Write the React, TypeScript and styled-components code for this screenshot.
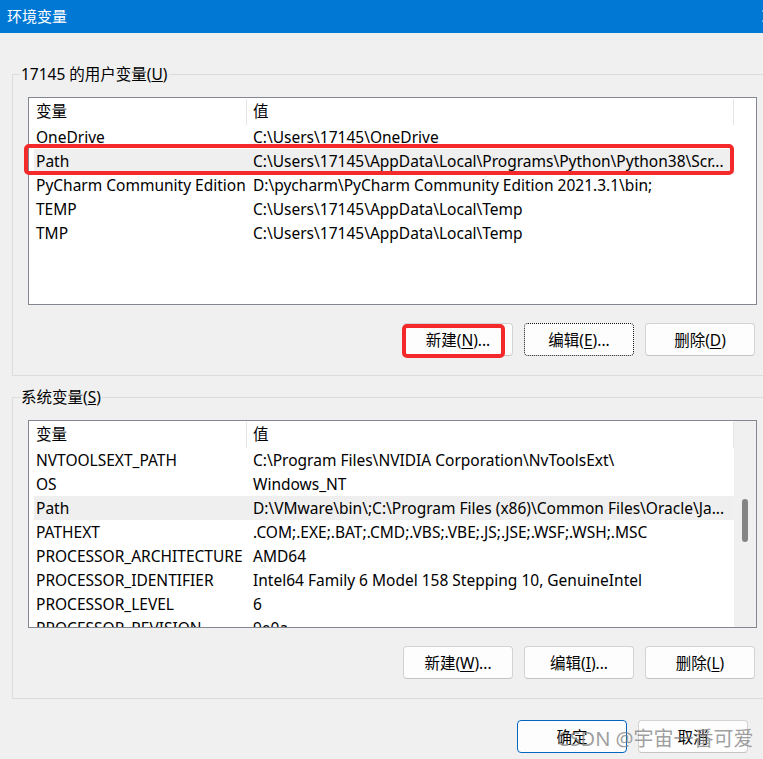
import React from "react";
import styled, { createGlobalStyle } from "styled-components";

const Global = createGlobalStyle`
  html, body {
    margin: 0;
    padding: 0;
    background: #f0f0f0;
    overflow: hidden;
  }
  body {
    font-family: "Noto Sans", "Noto Sans CJK SC", sans-serif;
    font-size: 15.5px;
    color: #000;
  }
`;

const Window = styled.div`
  position: relative;
  width: 800px;
  height: 759px;
  background: #f0f0f0;
  display: flex;
  flex-direction: column;
`;

const TitleBar = styled.div`
  flex: none;
  height: 33px;
  box-sizing: border-box;
  background: #0078d4;
  color: #fff;
  display: flex;
  align-items: center;
  justify-content: space-between;
  padding: 0 26px 2px 7px;
  font-size: 15px;
`;

const Content = styled.div`
  display: flex;
  flex-direction: column;
  padding: 41px 0 0 12px;
`;

const Group = styled.div<{ $gap?: number }>`
  position: relative;
  width: 761px;
  box-sizing: border-box;
  border: 1px solid #dcdcdc;
  padding: 22px 15px 19px 15px;
  margin-top: ${(p) => p.$gap ?? 0}px;
`;

const GroupLabel = styled.div`
  position: absolute;
  top: -11px;
  left: 7px;
  padding: 0 1px;
  line-height: 20px;
  background: #f0f0f0;
`;

const ListBox = styled.div`
  position: relative;
  height: 208px;
  box-sizing: border-box;
  border: 1px solid #828790;
  background: #fff;
  display: flex;
`;

const ListBody = styled.div`
  flex: 1;
  min-width: 0;
  overflow: hidden;
`;

const Header = styled.div`
  display: grid;
  grid-template-columns: 218px 487px 1fr;
  height: 27px;
`;

const HeadCell = styled.div<{ $pad: number; $sep?: boolean }>`
  box-sizing: border-box;
  padding-left: ${(p) => p.$pad}px;
  border-right: ${(p) => (p.$sep ? "1px solid #e5e5e5" : "none")};
  margin-top: 1px;
  line-height: 25px;
  white-space: nowrap;
`;

const Row = styled.div<{ $selected?: boolean }>`
  display: grid;
  grid-template-columns: 213px 1fr;
  width: 700px;
  height: 24px;
  margin-left: 5px;
  line-height: 24px;
  background: ${(p) => (p.$selected ? "#efefef" : "transparent")};
  white-space: nowrap;
`;

const NameCell = styled.div`
  padding-left: 2px;
  overflow: hidden;
`;

const ValueCell = styled.div`
  padding-left: 6px;
  overflow: hidden;
`;

const ScrollTrack = styled.div`
  flex: none;
  width: 22px;
  background: #f0f0f0;
  display: flex;
  justify-content: center;
  align-items: flex-start;
`;

const ScrollThumb = styled.div<{ $top: number; $len: number }>`
  width: 6px;
  height: ${(p) => p.$len}px;
  margin-top: ${(p) => p.$top}px;
  border-radius: 3px;
  background: #858585;
`;

const ButtonRow = styled.div<{ $top: number; $right: number }>`
  display: flex;
  justify-content: flex-end;
  gap: 11px;
  margin-top: ${(p) => p.$top}px;
  padding-right: ${(p) => p.$right}px;
`;

const Button = styled.button<{ $focus?: boolean; $primary?: boolean }>`
  position: relative;
  width: 110px;
  height: 33px;
  box-sizing: border-box;
  padding: 0;
  border-radius: 4px;
  background: #fdfdfd;
  font-family: inherit;
  font-size: 15.5px;
  color: #000;
  border: 1px solid #d3d3d3;
  border-bottom-color: #c4c4c4;
  ${(p) => (p.$focus ? "border: 1px dotted #111;" : "")}
  ${(p) => (p.$primary ? "border: 1px solid #0067c0;" : "")}
  u {
    text-decoration: underline;
    text-underline-offset: 2px;
  }
`;

const Highlight = styled.div<{ $l: number; $t: number; $w: number; $h: number }>`
  position: absolute;
  left: ${(p) => p.$l}px;
  top: ${(p) => p.$t}px;
  width: ${(p) => p.$w}px;
  height: ${(p) => p.$h}px;
  box-sizing: border-box;
  border: 4px solid #f42a2a;
  border-radius: 5px;
  pointer-events: none;
`;

const Watermark = styled.div`
  position: absolute;
  left: 557px;
  top: 725px;
  font-size: 20px;
  line-height: 28px;
  color: rgba(128, 128, 128, 0.75);
  white-space: nowrap;
  pointer-events: none;
`;

type Item = { name: string; value: string; selected?: boolean };

const userVars: Item[] = [
  { name: "OneDrive", value: "C:\\Users\\17145\\OneDrive" },
  {
    name: "Path",
    value: "C:\\Users\\17145\\AppData\\Local\\Programs\\Python\\Python38\\Scr...",
    selected: true,
  },
  { name: "PyCharm Community Edition", value: "D:\\pycharm\\PyCharm Community Edition 2021.3.1\\bin;" },
  { name: "TEMP", value: "C:\\Users\\17145\\AppData\\Local\\Temp" },
  { name: "TMP", value: "C:\\Users\\17145\\AppData\\Local\\Temp" },
];

const sysVars: Item[] = [
  { name: "NVTOOLSEXT_PATH", value: "C:\\Program Files\\NVIDIA Corporation\\NvToolsExt\\" },
  { name: "OS", value: "Windows_NT" },
  {
    name: "Path",
    value: "D:\\VMware\\bin\\;C:\\Program Files (x86)\\Common Files\\Oracle\\Ja...",
    selected: true,
  },
  { name: "PATHEXT", value: ".COM;.EXE;.BAT;.CMD;.VBS;.VBE;.JS;.JSE;.WSF;.WSH;.MSC" },
  { name: "PROCESSOR_ARCHITECTURE", value: "AMD64" },
  { name: "PROCESSOR_IDENTIFIER", value: "Intel64 Family 6 Model 158 Stepping 10, GenuineIntel" },
  { name: "PROCESSOR_LEVEL", value: "6" },
  { name: "PROCESSOR_REVISION", value: "9e0a" },
];

function VarList({ items }: { items: Item[] }) {
  return (
    <>
      <Header>
        <HeadCell $pad={7} $sep>
          变量
        </HeadCell>
        <HeadCell $pad={6} $sep>
          值
        </HeadCell>
        <HeadCell $pad={0} />
      </Header>
      {items.map((it) => (
        <Row key={it.name} $selected={it.selected}>
          <NameCell>{it.name}</NameCell>
          <ValueCell>{it.value}</ValueCell>
        </Row>
      ))}
    </>
  );
}

function CloseIcon() {
  return (
    <svg width="12" height="12" viewBox="0 0 12 12" aria-hidden>
      <path d="M0.5 0.5 L11.5 11.5 M11.5 0.5 L0.5 11.5" stroke="#fff" strokeWidth="1.1" fill="none" />
    </svg>
  );
}

export default function App() {
  return (
    <>
      <Global />
      <Window>
        <TitleBar>
          <span>环境变量</span>
          <CloseIcon />
        </TitleBar>
        <Content>
          <Group>
            <GroupLabel>
              17145 的用户变量(<u>U</u>)
            </GroupLabel>
            <ListBox>
              <ListBody>
                <VarList items={userVars} />
              </ListBody>
              <Highlight $l={-5} $t={46} $w={710} $h={31} />
            </ListBox>
            <ButtonRow $top={18} $right={2}>
              <Button>
                新建(<u>N</u>)...
                <Highlight $l={-2} $t={0} $w={103} $h={34} />
              </Button>
              <Button $focus>
                编辑(<u>E</u>)...
              </Button>
              <Button>
                删除(<u>D</u>)
              </Button>
            </ButtonRow>
          </Group>
          <Group $gap={21}>
            <GroupLabel>
              系统变量(<u>S</u>)
            </GroupLabel>
            <ListBox>
              <ListBody>
                <VarList items={sysVars} />
              </ListBody>
              <ScrollTrack>
                <ScrollThumb $top={78} $len={43} />
              </ScrollTrack>
            </ListBox>
            <ButtonRow $top={18} $right={2}>
              <Button>
                新建(<u>W</u>)...
              </Button>
              <Button>
                编辑(<u>I</u>)...
              </Button>
              <Button>
                删除(<u>L</u>)
              </Button>
            </ButtonRow>
          </Group>
          <ButtonRow $top={21} $right={52}>
            <Button $primary>确定</Button>
            <Button>取消</Button>
          </ButtonRow>
        </Content>
        <Watermark>CSDN @宇宙一番可爱</Watermark>
      </Window>
    </>
  );
}
